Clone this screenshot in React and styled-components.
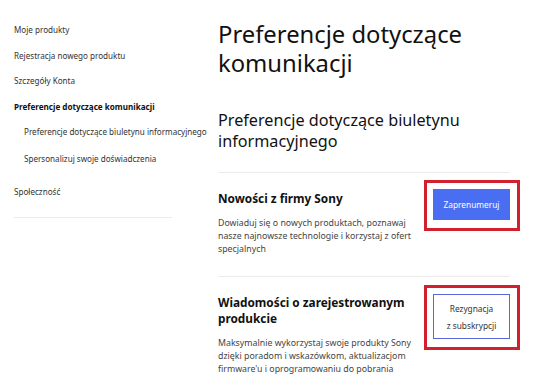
import React from 'react';
import styled, { createGlobalStyle } from 'styled-components';

const GlobalStyle = createGlobalStyle`
  html, body {
    margin: 0;
    padding: 0;
    background: #ffffff;
  }
  body {
    font-family: "Noto Sans", "Open Sans", sans-serif;
    color: #1a1a1a;
  }
`;

// Cała strona: menu boczne + treść
const Page = styled.div`
  display: flex;
  width: 538px;
  height: 391px;
  overflow: hidden;
`;

// Menu boczne
const Sidebar = styled.nav`
  width: 204px;
  padding: 17px 0 0 14px;
  box-sizing: border-box;
`;

const NavList = styled.ul`
  list-style: none;
  margin: 0;
  padding: 0;
`;

const NavItem = styled.li`
  font-size: 8.1px;
  line-height: 13px;
  padding: 6.25px 0;
  padding-left: ${p => (p.$sub ? '10px' : '0')};
  margin-top: ${p => p.$gap || '0'};
  font-weight: ${p => (p.$active ? 700 : 400)};
  color: ${p => (p.$active ? '#111' : '#333')};
  white-space: nowrap;
`;

const SideDivider = styled.hr`
  width: 158px;
  margin: 13px 0 0;
  border: 0;
  border-top: 1px solid #ebebeb;
`;

// Główna kolumna
const Main = styled.main`
  width: 292px;
  margin-left: 14px;
  padding-top: 20px;
`;

const PageTitle = styled.h1`
  margin: 0;
  font-size: 23.8px;
  line-height: 29px;
  font-weight: 400;
  color: #111;
`;

const SubTitle = styled.h2`
  margin: 32px 0 0;
  font-size: 16.2px;
  line-height: 21px;
  font-weight: 400;
  color: #111;
`;

const SectionList = styled.div`
  margin-top: 20px;
`;

const Section = styled.section`
  display: flex;
  justify-content: space-between;
  align-items: flex-start;
  border-top: 1px solid #ececec;
  padding: 7px 0 20px;
`;

const TextCol = styled.div`
  width: 200px;
  padding-top: 10px;
`;

const ItemTitle = styled.h3`
  margin: 0;
  font-size: 11.8px;
  line-height: 16px;
  font-weight: 700;
  color: #111;
`;

const ItemDesc = styled.p`
  margin: 11px 0 0;
  font-size: 8.8px;
  line-height: 13px;
  color: #444;
  white-space: nowrap;
`;

// Czerwona ramka wokół przycisku
const Highlight = styled.div`
  border: 3px solid #d2202f;
  padding: 6px 7px 8px 6px;
  margin-right: -10px;
  margin-top: ${p => p.$top || '0'};
`;

const Button = styled.button`
  display: block;
  box-sizing: border-box;
  width: 77px;
  height: ${p => p.$height};
  margin: 0;
  padding: 0 4px;
  font-family: inherit;
  font-size: 8.3px;
  line-height: 17px;
  cursor: pointer;
  border: 1px solid ${p => (p.$primary ? '#4a6ef2' : '#5a66e0')};
  background: ${p => (p.$primary ? '#4a6ef2' : '#ffffff')};
  color: ${p => (p.$primary ? '#ffffff' : '#333')};
`;

const navItems = [
  { label: 'Moje produkty' },
  { label: 'Rejestracja nowego produktu' },
  { label: 'Szczegóły Konta' },
  { label: 'Preferencje dotyczące komunikacji', active: true },
  { label: 'Preferencje dotyczące biuletynu informacyjnego', sub: true },
  { label: 'Spersonalizuj swoje doświadczenia', sub: true, gap: '1.5px' },
  { label: 'Społeczność', gap: '7px' },
];

export default function App() {
  return (
    <>
      <GlobalStyle />
      <Page>
        <Sidebar>
          <NavList>
            {navItems.map(item => (
              <NavItem key={item.label} $sub={item.sub} $active={item.active} $gap={item.gap}>
                {item.label}
              </NavItem>
            ))}
          </NavList>
          <SideDivider />
        </Sidebar>

        <Main>
          <PageTitle>
            Preferencje dotyczące
            <br />
            komunikacji
          </PageTitle>
          <SubTitle>
            Preferencje dotyczące biuletynu
            <br />
            informacyjnego
          </SubTitle>

          <SectionList>
            <Section>
              <TextCol>
                <ItemTitle>Nowości z firmy Sony</ItemTitle>
                <ItemDesc>
                  Dowiaduj się o nowych produktach, poznawaj
                  <br />
                  nasze najnowsze technologie i korzystaj z ofert
                  <br />
                  specjalnych
                </ItemDesc>
              </TextCol>
              <Highlight>
                <Button $primary $height="31px">Zaprenumeruj</Button>
              </Highlight>
            </Section>

            <Section>
              <TextCol>
                <ItemTitle>
                  Wiadomości o zarejestrowanym
                  <br />
                  produkcie
                </ItemTitle>
                <ItemDesc>
                  Maksymalnie wykorzystaj swoje produkty Sony
                  <br />
                  dzięki poradom i wskazówkom, aktualizacjom
                  <br />
                  firmware'u i oprogramowaniu do pobrania
                </ItemDesc>
              </TextCol>
              <Highlight $top="1px">
                <Button $height="45px">
                  Rezygnacja
                  <br />
                  z subskrypcji
                </Button>
              </Highlight>
            </Section>
          </SectionList>
        </Main>
      </Page>
    </>
  );
}
